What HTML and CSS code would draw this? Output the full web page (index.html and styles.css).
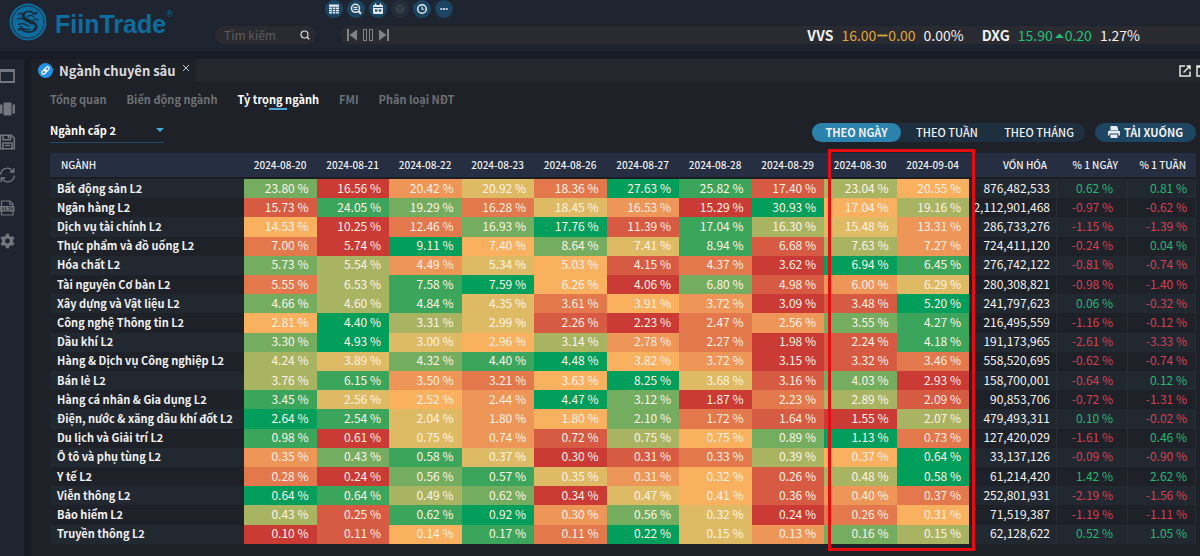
FILE: index.html
```html
<!DOCTYPE html>
<html lang="vi">
<head>
<meta charset="utf-8">
<title>FiinTrade - Ngành chuyên sâu</title>
<link rel="stylesheet" href="styles.css">
</head>
<body>
<header class="topbar">
  <a class="brand" href="#" aria-label="FiinTrade">
    <svg class="brand-mark" viewBox="0 0 38 38" aria-hidden="true">
      <circle cx="19" cy="19" r="18.500" fill="#0f6c9e"/>
      <circle cx="19" cy="19" r="16.200" fill="none" stroke="#1b2d3c" stroke-width="1"/>
      <g fill="none" stroke="#182b3a" stroke-linecap="round" stroke-linejoin="round">
        <path stroke-width="3" d="M14.500 11.500c-1 2.500 1 4.200 3.500 5.300l6.500 3c3.500 2 3.500 5 1 7"/>
        <path stroke-width="1.800" d="M15 10.500c3-3 7-2.500 9.500-.3 1.200 1 2.300.8 3-.7M25.500 27c-3.500 3-9.500 2.800-13-.5-1.200-1.200-2.500-1-3 .5"/>
        <path stroke-width="1.300" d="M9 11.500c1.500-1.500 3.500-1.500 5-.5M8.500 16c2-1.200 4-.8 6 .5l8.500 4.500M9.500 21.500c4-2 7-.5 10 1.500M11.500 23.500c2 2.500 5.500 3.500 9 2.800M19 13.500c2-1.500 4.500-1 6 .5M29 17c-1.500-1-3.500-1-5 0"/>
      </g>
    </svg>
    <span class="brand-name">FiinTrade</span><span class="brand-reg">®</span>
  </a>
  <div class="top-main">
    <nav class="quick" aria-label="Công cụ">
      <button class="round" aria-label="Bảng"><svg viewBox="0 0 18 18"><rect x="4" y="4.500" width="10" height="9" fill="#e4eaf2"/><path d="M4 7.200h10M4 9.500h10M4 11.600h10M7.500 7v6.500M10.500 7v6.500" stroke="#1b4563" stroke-width=".7"/></svg></button>
      <button class="round" aria-label="Lọc"><svg viewBox="0 0 18 18" fill="none" stroke="#e4eaf2"><circle cx="8.500" cy="8.300" r="4" stroke-width="1.500"/><path d="M11.500 11.300l2.500 2.500" stroke-width="2"/><path d="M6.500 7.300h4M6.500 9.300h4" stroke-width="1.200"/></svg></button>
      <button class="round" aria-label="Lịch"><svg viewBox="0 0 18 18"><rect x="4" y="5" width="10" height="9" rx="1" fill="#e4eaf2"/><path d="M6.500 3.500v3M11.500 3.500v3" stroke="#e4eaf2" stroke-width="1.500"/><path d="M4.500 7.500h9" stroke="#1b4563"/><path d="M6 10.500h2.500M9.800 10.500h2.500" stroke="#1b4563" stroke-width="2"/></svg></button>
      <button class="round round-off" disabled aria-label="Tiền"><svg viewBox="0 0 18 18"><circle cx="9" cy="9" r="4.500" fill="#3a3f49"/><path d="M9 6.500v5" stroke="#26313e" stroke-width="1.500"/></svg></button>
      <button class="round" aria-label="Lịch sử"><svg viewBox="0 0 18 18" fill="none" stroke="#e4eaf2" stroke-width="1.500"><circle cx="9" cy="9" r="4.300"/><path d="M9 6.500v2.700h2.300" stroke-width="1.100"/></svg></button>
      <button class="round" aria-label="Thêm"><svg viewBox="0 0 18 18" fill="#e4eaf2"><rect x="5.300" y="8.200" width="2" height="1.600"/><rect x="8" y="8.200" width="2" height="1.600"/><rect x="10.700" y="8.200" width="2" height="1.600"/></svg></button>
    </nav>
    <div class="strip">
      <label class="search">
        <input type="text" placeholder="Tìm kiếm" aria-label="Tìm kiếm">
        <svg viewBox="0 0 10 10" fill="none" stroke="#d6d8dc"><circle cx="4.500" cy="4.500" r="3.500" stroke-width="1.200"/><path d="M7 7l2.300 2.300" stroke-width="1.500"/></svg>
      </label>
      <div class="ticker">
        <div class="player">
          <button aria-label="Trước"><svg viewBox="0 0 12 12" fill="#808286"><rect x="1" y="0" width="2" height="12"/><path d="M11 .5v11L3.500 6z"/></svg></button>
          <button aria-label="Dừng"><svg viewBox="0 0 12 12" fill="none" stroke="#808286"><rect x="1.500" y=".5" width="3" height="11"/><rect x="7.500" y=".5" width="3" height="11"/></svg></button>
          <button aria-label="Sau"><svg viewBox="0 0 12 12" fill="#808286"><rect x="9" y="0" width="2" height="12"/><path d="M1 .5v11L8.500 6z"/></svg></button>
        </div>
        <div class="quotes">
          <div class="quote"><b>VVS</b><span class="flat">16.00<svg class="mark" viewBox="0 0 12 10"><path d="M1.500 5.500h10" stroke="#e0a63f" stroke-width="1.800"/></svg>0.00</span><span>0.00%</span></div>
          <div class="quote"><b>DXG</b><span class="gain">15.90<svg class="mark" viewBox="0 0 12 10"><path d="M2 8l4.500-4.500L11 8z" fill="#1fc077"/></svg>0.20</span><span>1.27%</span></div>
        </div>
      </div>
    </div>
  </div>
</header>

<div class="body">
  <nav class="side" aria-label="Thanh bên">
    <button aria-label="Cửa sổ"><svg viewBox="0 0 16 16"><path fill="none" stroke="#73767c" stroke-width="1.800" d="M0 2h14v12H0z"/><path d="M0 2.500h14.800" stroke="#73767c" stroke-width="3"/></svg></button>
    <button aria-label="Bố cục"><svg viewBox="0 0 16 16" fill="#73767c"><rect x="3.500" y="1.500" width="8" height="13" rx="1"/><rect x="0" y="3.500" width="2.500" height="9"/><rect x="12.500" y="3.500" width="2.500" height="9"/></svg></button>
    <button aria-label="Lưu"><svg viewBox="0 0 16 16" fill="none" stroke="#73767c" stroke-width="1.600"><path d="M.3 1.200h11l3 3v10.500H.3z"/><path d="M3 1.500v4.300h7.500V1.500M3 14.500V9h9v5.500M8.500 2v2.500M5 11.500h5"/></svg></button>
    <button aria-label="Làm mới"><svg viewBox="0 0 16 16" fill="none" stroke="#73767c" stroke-width="1.400"><path d="M.7 7.500A6.600 6.600 0 0 1 12 3.200l1.500 1.500M14.300 8.500A6.600 6.600 0 0 1 3 12.800l-1.500-1.500"/><path d="M13.800 1v4h-4M1.200 15v-4h4"/></svg></button>
    <button aria-label="Xuất tệp"><svg viewBox="0 0 16 16"><path fill="none" stroke="#73767c" stroke-width="1.200" d="M1.500 6V1h8.500l3 3v2M1.500 11v4h11.500v-4"/><path d="M9.500 1v3.500H13" fill="none" stroke="#73767c"/><rect x="0" y="6" width="14.500" height="5.500" fill="#73767c"/><path d="M2 7.300l2 2.800M4 7.300l-2 2.800M5.500 7v3h1.500M8.300 7.500h1.500v2.200H8.300M11 7.300l2 2.800M13 7.300l-2 2.800" fill="none" stroke="#1e2530" stroke-width=".7"/></svg></button>
    <button aria-label="Cài đặt"><svg viewBox="0 0 16 16"><g fill="none" stroke="#73767c"><circle cx="7.500" cy="8" r="4" stroke-width="3.200"/><path stroke-width="3.200" d="M7.500 .8v2.400M7.500 12.800v2.400M1.300 4.400l2 1.200M11.700 10.400l2 1.200M1.300 11.600l2-1.200M11.700 5.600l2-1.200"/></g></svg></button>
  </nav>

  <main class="panel">
    <div class="tabbar">
      <div class="tab">
        <svg class="link-icon" viewBox="0 0 16 16"><circle cx="8" cy="8" r="8" fill="#258fe3"/><g fill="none" stroke="#fff" stroke-width="1.300" transform="rotate(-45 8 8)"><rect x="3" y="6.300" width="5.800" height="3.400" rx="1.700"/><rect x="7.200" y="6.300" width="5.800" height="3.400" rx="1.700"/></g></svg>
        <h1>Ngành chuyên sâu</h1>
        <button class="close" aria-label="Đóng"><svg viewBox="0 0 8 8"><path d="M1 1l6 6M7 1L1 7" stroke="#c4c6ca" stroke-width="1"/></svg></button>
      </div>
      <div class="tab-tools">
        <button aria-label="Mở rộng"><svg viewBox="0 0 12 12" fill="none" stroke="#e8e8e4" stroke-width="1.500"><path d="M6 1H1v10h10V6.500M7.500 1H11v3.500M11 1L4.500 7.500"/></svg></button>
        <button aria-label="Phóng to"><svg viewBox="0 0 12 12" fill="none" stroke="#e8e8e4" stroke-width="1.500"><path d="M1 1h10v10H1zM1 2h10"/></svg></button>
      </div>
    </div>

    <nav class="subtabs">
      <a href="#">Tổng quan</a>
      <a href="#">Biến động ngành</a>
      <a href="#" class="current" aria-current="page">Tỷ trọng ngành</a>
      <a href="#">FMI</a>
      <a href="#">Phân loại NĐT</a>
    </nav>

    <div class="toolbar">
      <div class="picker">
        <select aria-label="Cấp ngành"><option>Ngành cấp 2</option></select>
        <svg viewBox="0 0 8 4" aria-hidden="true"><path d="M0 0h8L4 4z" fill="#3fa9dc"/></svg>
      </div>
      <div class="actions">
        <div class="segment">
          <button class="on" aria-pressed="true">THEO NGÀY</button>
          <button aria-pressed="false">THEO TUẦN</button>
          <button aria-pressed="false">THEO THÁNG</button>
        </div>
        <button class="download"><svg viewBox="0 0 12 12" fill="#e8edf3"><path d="M2.500 0h6l1.500 1.500V4H2.500z"/><path d="M1.500 4.500h9A1.500 1.500 0 0 1 12 6v3.500h-1.500V7.500h-9v2H0V6a1.500 1.500 0 0 1 1.500-1.500z"/><path d="M2.500 8.500h7V12h-7z"/></svg>TẢI XUỐNG</button>
      </div>
    </div>

    <div class="sheet">
      <table>
        <colgroup>
          <col class="w-name"><col span="10"><col class="w-cap"><col class="w-day"><col class="w-week">
        </colgroup>
        <thead><tr id="head"></tr></thead>
        <tbody id="rows"></tbody>
      </table>
      <div class="focus-box"></div>
    </div>
  </main>
</div>
<script src="table.js"></script>
</body>
</html>
```
FILE: styles.css
```css
* { box-sizing: border-box; }

body {
  margin: 0;
  height: 100vh;
  display: flex;
  flex-direction: column;
  overflow: hidden;
  background: #191c24;
  color: #f1f1f2;
  font-family: "Noto Sans CJK SC", "Noto Sans", sans-serif;
  font-size: 12px;
  line-height: 18px;
}

button {
  margin: 0;
  padding: 0;
  border: 0;
  background: none;
  color: inherit;
  font: inherit;
  display: flex;
  align-items: center;
  justify-content: center;
}

a { color: inherit; text-decoration: none; }
svg { display: block; flex: none; }

/* Top bar */
.topbar {
  display: flex;
  height: 51px;
  margin-bottom: 8px;
  background: #1e2530;
}

.brand {
  display: flex;
  width: 215px;
  padding: 3px 0 0 9px;
  color: #0f6c9e;
  font-family: "Liberation Sans", Arial, sans-serif;
}
.brand-mark { width: 38px; height: 38px; }
.brand-name {
  margin-left: 8px;
  font-size: 25px;
  font-weight: 700;
  line-height: 42px;
}
.brand-reg { font-size: 9px; line-height: 22px; }

.top-main { flex: 1; min-width: 0; }

.quick {
  display: flex;
  gap: 4px;
  padding-left: 110px;
  margin-bottom: 8px;
}
.round {
  width: 18px;
  height: 18px;
  border-radius: 50%;
  background: #1b4563;
}
.round svg { width: 18px; height: 18px; }
.round-off { background: #232e3b; }

.strip { display: flex; gap: 24px; }

.search {
  display: flex;
  align-items: center;
  width: 101px;
  height: 18px;
  padding: 0 6px 0 9px;
  border-radius: 9px;
  background: #2a2b31;
}
.search input {
  flex: 1;
  min-width: 0;
  padding: 0;
  border: 0;
  outline: 0;
  background: none;
  color: #ddd;
  font: inherit;
}
.search input::placeholder { color: #595b61; opacity: 1; }
.search svg { width: 10px; height: 10px; }

.ticker {
  flex: 1;
  display: flex;
  align-items: center;
  justify-content: space-between;
  height: 18px;
  padding: 0 60px 0 6px;
  border-radius: 9px 0 0 9px;
  background: #2a2b31;
}
.player { display: flex; gap: 4px; }
.player svg { width: 12px; height: 12px; }
.quotes { display: flex; gap: 18px; }
.quote { display: flex; gap: 8px; font-size: 14px; line-height: 16px; }
.flat, .gain { display: flex; align-items: center; }
.flat { color: #e0a63f; }
.gain { color: #1fc077; }
.mark { width: 12px; height: 10px; }

/* Body */
.body { flex: 1; display: flex; gap: 7px; min-height: 0; }

.side {
  width: 24px;
  padding-top: 9px;
  display: flex;
  flex-direction: column;
  align-items: flex-start;
  gap: 17px;
  background: #1e2530;
}
.side svg { width: 16px; height: 16px; }

.panel {
  flex: 1;
  min-width: 0;
  display: flex;
  flex-direction: column;
  background: #1f2128;
}

.tabbar {
  display: flex;
  justify-content: space-between;
  height: 23px;
  overflow: hidden;
  background: #25272e;
}
.tab {
  display: flex;
  align-items: center;
  gap: 6px;
  width: 165px;
  padding-left: 7px;
  background: #1f2128;
}
.link-icon { width: 15px; height: 15px; }
.tab h1 {
  margin: 0;
  font-size: 13px;
  font-weight: 700;
  line-height: 22px;
  color: #dcdcde;
  white-space: nowrap;
}
.close { width: 8px; height: 8px; margin-bottom: 5px; }
.close svg { width: 8px; height: 8px; }
.tab-tools { display: flex; gap: 5px; margin-right: -8px; }
.tab-tools svg { width: 12px; height: 12px; }

.subtabs {
  display: flex;
  align-items: center;
  gap: 20px;
  height: 34px;
  padding-left: 19px;
  font-size: 11px;
  font-weight: 700;
  color: #6e7075;
  white-space: nowrap;
}
.subtabs a { position: relative; }
.subtabs .current { color: #fff; }
.subtabs .current::after {
  content: "";
  position: absolute;
  left: calc(50% - 9px);
  bottom: -2px;
  width: 18px;
  height: 2px;
  background: #4aa9d8;
}

.toolbar {
  display: flex;
  justify-content: space-between;
  align-items: center;
  height: 32px;
  padding: 0 4px 0 19px;
}
.picker {
  display: flex;
  align-items: center;
  width: 114px;
  height: 22px;
  padding-bottom: 4px;
  border-bottom: 1px solid #1f4a66;
}
.picker select {
  flex: 1;
  padding: 0;
  border: 0;
  outline: 0;
  appearance: none;
  background: none;
  color: #fff;
  font: inherit;
  font-size: 11px;
  font-weight: 700;
}
.picker svg { width: 8px; height: 4px; }

.actions { display: flex; gap: 10px; font-size: 11px; font-weight: 500; }
.segment {
  display: flex;
  height: 19px;
  border-radius: 10px;
  background: #1e303f;
}
.segment button { width: 92px; border-radius: 10px; }
.segment .on { width: 89px; background: #2b82ac; font-weight: 700; }
.download {
  gap: 4px;
  width: 101px;
  height: 19px;
  border-radius: 10px;
  background: #1e4561;
  font-weight: 700;
}
.download svg { width: 12px; height: 12px; }

/* Table */
.sheet {
  position: relative;
  flex: 1;
  min-height: 0;
  margin: 5px 4px 12px 19px;
}
table {
  width: 100%;
  height: 100%;
  table-layout: fixed;
  border-collapse: separate;
  border-spacing: 0;
}
.w-name { width: 194px; }
.w-cap { width: 88px; }
.w-day { width: 71px; }
.w-week { width: 68px; }

th, td { padding: 0; white-space: nowrap; }
thead th {
  height: 26px;
  border-bottom: 2px solid #1b1e25;
  background: #262f42;
  font-size: 10px;
  font-weight: 500;
  text-align: right;
  padding-right: 10px;
}
thead th:first-child { text-align: left; padding-left: 11px; }

tbody tr:nth-child(odd) { background: #222830; }
tbody th, tbody td { padding-bottom: 2px; line-height: 16px; }
tbody th { padding-left: 7px; font-weight: 700; text-align: left; font-size: 11px; }
tbody td { padding-right: 8px; text-align: right; }
.heat { color: #fff3e6; }
.cap, .day, .week { border-right: 1px solid #282c34; }
tbody .cap { padding-right: 6px; color: #f4f4f4; }
tbody .day { padding-right: 14px; }
.up { color: #26b873; }
.down { color: #d93f50; }

.h0 { background: #ca3b36; }
.h1 { background: #d75b42; }
.h2 { background: #e2784c; }
.h3 { background: #ee9558; }
.h4 { background: #f9b05f; }
.h5 { background: #dfba64; }
.h6 { background: #a9b463; }
.h7 { background: #74ad60; }
.h8 { background: #3ca55c; }
.h9 { background: #029e5b; }

/* Frame around the two latest sessions */
.focus-box {
  position: absolute;
  top: -4px;
  right: 221px;
  bottom: -7px;
  width: 147px;
  border: 3px solid #e50d12;
}
```
FILE: table.js
```js
const heads = ["NGÀNH", "2024-08-20", "2024-08-21", "2024-08-22", "2024-08-23", "2024-08-26", "2024-08-27",
  "2024-08-28", "2024-08-29", "2024-08-30", "2024-09-04", "VỐN HÓA", "% 1 NGÀY", "% 1 TUẦN"];

// name, ten daily shares, heat rank of each share within its row (0 low, 9 high), market cap, 1 day, 1 week
const rows = [
  ["Bất động sản L2", "23.80 16.56 20.42 20.92 18.36 27.63 25.82 17.40 23.04 20.55", "7035298164", "876,482,533", "0.62", "0.81"],
  ["Ngân hàng L2", "15.73 24.05 19.29 16.28 18.45 16.53 15.29 30.93 17.04 19.16", "1872530946", "2,112,901,468", "-0.97", "-0.62"],
  ["Dịch vụ tài chính L2", "14.53 10.25 12.46 16.93 17.76 11.39 17.04 16.30 15.48 13.31", "4027918653", "286,733,276", "-1.15", "-1.39"],
  ["Thực phẩm và đồ uống L2", "7.00 5.74 9.11 7.40 8.64 7.41 8.94 6.68 7.63 7.27", "2094758163", "724,411,120", "-0.24", "0.04"],
  ["Hóa chất L2", "5.73 5.54 4.49 5.34 5.03 4.15 4.37 3.62 6.94 6.45", "7635412098", "276,742,122", "-0.81", "-0.74"],
  ["Tài nguyên Cơ bản L2", "5.55 6.53 7.58 7.59 6.26 4.06 6.80 4.98 6.00 6.29", "2689407135", "280,308,821", "-0.98", "-1.40"],
  ["Xây dựng và Vật liệu L2", "4.66 4.60 4.84 4.35 3.61 3.91 3.72 3.09 3.48 5.20", "7685243019", "241,797,623", "0.06", "-0.32"],
  ["Công nghệ Thông tin L2", "2.81 4.40 3.31 2.99 2.26 2.23 2.47 2.56 3.55 4.27", "4965102378", "216,495,559", "-1.16", "-0.12"],
  ["Dầu khí L2", "3.30 4.93 3.00 2.96 3.14 2.78 2.27 1.98 2.24 4.18", "7954632018", "191,173,965", "-2.61", "-3.33"],
  ["Hàng & Dịch vụ Công nghiệp L2", "4.24 3.89 4.32 4.40 4.48 3.82 3.72 3.15 3.32 3.46", "6578943012", "558,520,695", "-0.62", "-0.74"],
  ["Bán lẻ L2", "3.76 6.15 3.50 3.21 3.63 8.25 3.68 3.16 4.03 2.93", "6832495170", "158,700,001", "-0.64", "0.12"],
  ["Hàng cá nhân & Gia dụng L2", "3.45 2.56 2.52 2.44 4.47 3.12 1.87 2.23 2.89 2.09", "8543970261", "90,853,706", "-0.72", "-1.31"],
  ["Điện, nước & xăng dầu khí đốt L2", "2.64 2.54 2.04 1.80 1.80 2.10 1.72 1.64 1.55 2.07", "9853472106", "479,493,311", "0.10", "-0.02"],
  ["Du lịch và Giải trí L2", "0.98 0.61 0.75 0.74 0.72 0.75 0.75 0.89 1.13 0.73", "8053164792", "127,420,029", "-1.61", "0.46"],
  ["Ô tô và phụ tùng L2", "0.35 0.43 0.58 0.37 0.30 0.31 0.33 0.39 0.37 0.64", "3785012649", "33,137,126", "-0.09", "-0.90"],
  ["Y tế L2", "0.28 0.24 0.56 0.57 0.35 0.31 0.32 0.26 0.48 0.58", "2078534169", "61,214,420", "1.42", "2.62"],
  ["Viễn thông L2", "0.64 0.64 0.49 0.62 0.34 0.47 0.41 0.36 0.40 0.37", "9867054132", "252,801,931", "-2.19", "-1.56"],
  ["Bảo hiểm L2", "0.43 0.25 0.62 0.92 0.30 0.56 0.32 0.24 0.26 0.31", "6189375024", "71,519,387", "-1.19", "-1.11"],
  ["Truyền thông L2", "0.10 0.11 0.14 0.17 0.11 0.22 0.15 0.13 0.16 0.15", "0148295376", "62,128,622", "0.52", "1.05"]
];

const change = (value, cls) =>
  `<td class="${cls} ${value.startsWith("-") ? "down" : "up"}">${value} %</td>`;

document.getElementById("head").innerHTML = heads.map(h => `<th scope="col">${h}</th>`).join("");
document.getElementById("rows").innerHTML = rows.map(([name, shares, ranks, cap, day, week]) =>
  `<tr><th scope="row">${name.replace("&", "&amp;")}</th>` +
  shares.split(" ").map((s, i) => `<td class="heat h${ranks[i]}">${s} %</td>`).join("") +
  `<td class="cap">${cap}</td>${change(day, "day")}${change(week, "week")}</tr>`).join("");
```
